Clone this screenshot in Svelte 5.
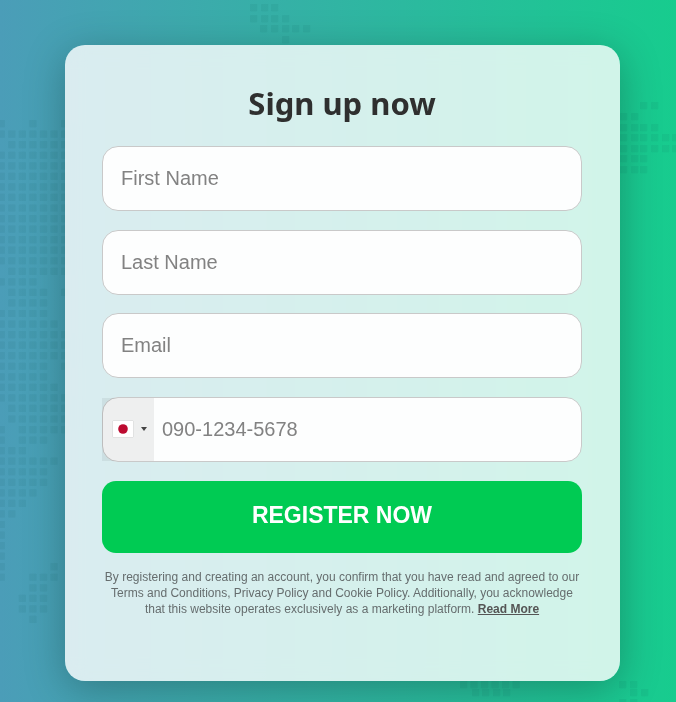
<script>
	const pitch = 10.55;
	const colX = (c) => -2.3 + c * pitch;
	const rowY = (n) => 120 + n * pitch;
	const full = [0, 1, 2, 3, 4, 5, 6];
	const noFirst = [1, 2, 3, 4, 5, 6];

	// left side of the dotted map, one list of columns per row
	const leftRows = [
		[0, 3, 6], full, noFirst,
		full, full, full, full, full, full, full, full, full, full, full,
		noFirst,
		[0, 1, 2, 3],
		[1, 2, 3, 4, 6],
		[1, 2, 3, 4],
		[0, 1, 2, 3, 4],
		[0, 1, 2, 3, 4, 5],
		full, full, full,
		[0, 1, 2, 3, 4, 6],
		[0, 1, 2, 3, 4],
		[0, 1, 2, 3, 4, 5],
		full, noFirst, noFirst,
		[0, 2, 3, 4, 5, 6],
		[0, 2, 3, 4],
		[0, 1, 2],
		[0, 1, 2, 3, 4, 5],
		[0, 1, 2, 3, 4],
		[0, 1, 2, 3, 4],
		[0, 1, 2, 3],
		[0, 1, 2],
		[0, 1],
		[0], [0], [0], [0],
		[0, 5],
		[0, 3, 4, 5],
		[3, 4],
		[2, 3, 4],
		[2, 3, 4],
		[3]
	];

	// smaller clusters: [y, x values]
	const clusters = [
		[4, [250, 261, 271]],
		[15, [250, 261, 271, 282]],
		[25, [260, 271, 282, 292, 303]],
		[36, [282]],
		[102, [640, 651]],
		[113, [620, 631]],
		[124, [620, 631, 640, 651]],
		[134, [620, 631, 640, 651, 662, 672]],
		[145, [620, 631, 640, 651, 662, 672]],
		[155, [620, 631, 640]],
		[166, [620, 631, 640]],
		[681, [460, 470.5, 481, 491.5, 502, 512.6, 619, 630]],
		[689, [472, 482, 493, 503, 630, 641]],
		[699, [619, 630]]
	];

	const dots = [
		...leftRows.flatMap((row, n) => row.map((c) => ({ x: colX(c), y: rowY(n) }))),
		...clusters.flatMap(([y, xs]) => xs.map((x) => ({ x, y })))
	];
</script>

<div class="page">
	<svg class="map" width="676" height="702" viewBox="0 0 676 702" aria-hidden="true">
		{#each dots as d}
			<rect x={d.x} y={d.y} width="7.2" height="7.2" rx="0.6" />
		{/each}
	</svg>

	<form class="card" onsubmit={(e) => e.preventDefault()}>
		<h1 class="title">Sign up now</h1>

		<input class="field" type="text" placeholder="First Name" />
		<input class="field" type="text" placeholder="Last Name" />
		<input class="field" type="email" placeholder="Email" />

		<div class="phone">
			<input class="field field--phone" type="tel" placeholder="090-1234-5678" />
			<div class="flag-box">
				<svg class="flag" width="20" height="16" viewBox="0 0 20 16">
					<rect width="20" height="16" fill="#fff" />
					<circle cx="10" cy="8" r="4.8" fill="#bc0a30" />
				</svg>
				<span class="caret"></span>
			</div>
		</div>

		<button class="submit" type="submit">REGISTER NOW</button>

		<p class="legal">
			By registering and creating an account, you confirm that you have read and agreed to our
			Terms and Conditions, Privacy Policy and Cookie Policy. Additionally, you acknowledge
			that this website operates exclusively as a marketing platform.
			<a href="#more">Read More</a>
		</p>
	</form>
</div>

<style>
	:global(body) {
		margin: 0;
	}

	.page {
		position: relative;
		box-sizing: border-box;
		width: 676px;
		height: 702px;
		padding: 45px 56px 21px 65px;
		overflow: hidden;
		background: linear-gradient(90deg, #4b9db8 0%, #17cc8e 100%);
		font-family: "Liberation Sans", Arial, sans-serif;
	}

	.map {
		position: absolute;
		top: 0;
		left: 0;
		filter: blur(0.6px);
	}

	.map rect {
		fill: #0b5b5e;
		opacity: 0.08;
	}

	.card {
		position: relative;
		box-sizing: border-box;
		display: flex;
		flex-direction: column;
		height: 636px;
		padding: 38px 38px 0 37px;
		border-radius: 20px;
		background: rgba(255, 255, 255, 0.8);
		box-shadow: 0 8px 40px rgba(0, 0, 0, 0.26);
		backdrop-filter: blur(10px);
	}

	.title {
		margin: 0 0 23px;
		font-family: "Noto Sans", "Open Sans", sans-serif;
		font-size: 31px;
		font-weight: 700;
		line-height: 40px;
		text-align: center;
		color: #2f2f2f;
	}

	.field {
		box-sizing: border-box;
		width: 100%;
		height: 65px;
		margin-bottom: 18.67px;
		padding: 0 18px;
		border: 1px solid #c9c9c9;
		border-radius: 16px;
		outline: none;
		background: #fdfefe;
		font-family: inherit;
		font-size: 20px;
		color: #333;
	}

	.field::placeholder {
		color: #828282;
	}

	.phone {
		position: relative;
		height: 65px;
		margin-bottom: 18.67px;
	}

	.field--phone {
		margin: 0;
		padding-left: 59px;
	}

	.flag-box {
		position: absolute;
		top: 1px;
		bottom: 1px;
		left: 0;
		display: flex;
		align-items: center;
		gap: 8px;
		width: 52px;
		padding-left: 11px;
		box-sizing: border-box;
		background: rgba(0, 0, 0, 0.06);
	}

	.flag {
		display: block;
		box-shadow: 0 0 1px rgba(0, 0, 0, 0.3);
	}

	.caret {
		width: 0;
		height: 0;
		border-top: 4px solid #444;
		border-left: 3px solid transparent;
		border-right: 3px solid transparent;
	}

	.submit {
		height: 72px;
		margin-bottom: 16px;
		padding: 0 0 3px;
		border: none;
		border-radius: 14px;
		background: #00cb53;
		font-family: inherit;
		font-size: 23px;
		font-weight: 700;
		color: #fff;
	}

	.legal {
		margin: 0;
		font-size: 12px;
		line-height: 16px;
		text-align: center;
		color: #666d6e;
	}

	.legal a {
		font-weight: 700;
		color: #555;
	}
</style>
